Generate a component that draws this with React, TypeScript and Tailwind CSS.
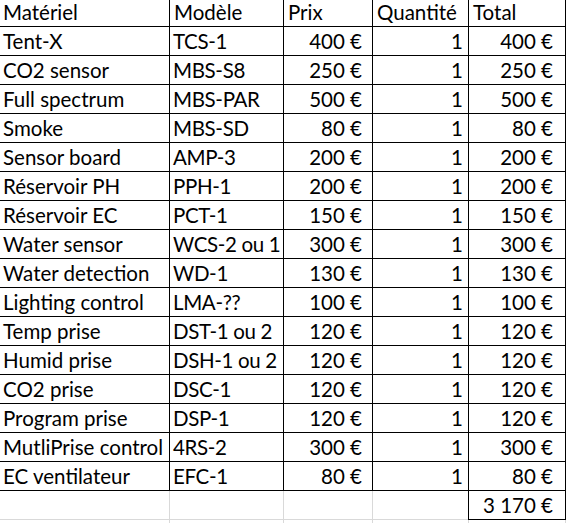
import React from 'react';

type Row = {
  item: string;
  model: string;
  price: string;
  qty: string;
  total: string;
};

const rows: Row[] = [
  { item: 'Tent-X', model: 'TCS-1', price: '400 €', qty: '1', total: '400 €' },
  { item: 'CO2 sensor', model: 'MBS-S8', price: '250 €', qty: '1', total: '250 €' },
  { item: 'Full spectrum', model: 'MBS-PAR', price: '500 €', qty: '1', total: '500 €' },
  { item: 'Smoke', model: 'MBS-SD', price: '80 €', qty: '1', total: '80 €' },
  { item: 'Sensor board', model: 'AMP-3', price: '200 €', qty: '1', total: '200 €' },
  { item: 'Réservoir PH', model: 'PPH-1', price: '200 €', qty: '1', total: '200 €' },
  { item: 'Réservoir EC', model: 'PCT-1', price: '150 €', qty: '1', total: '150 €' },
  { item: 'Water sensor', model: 'WCS-2 ou 1', price: '300 €', qty: '1', total: '300 €' },
  { item: 'Water detection', model: 'WD-1', price: '130 €', qty: '1', total: '130 €' },
  { item: 'Lighting control', model: 'LMA-??', price: '100 €', qty: '1', total: '100 €' },
  { item: 'Temp prise', model: 'DST-1 ou 2', price: '120 €', qty: '1', total: '120 €' },
  { item: 'Humid prise', model: 'DSH-1 ou 2', price: '120 €', qty: '1', total: '120 €' },
  { item: 'CO2 prise', model: 'DSC-1', price: '120 €', qty: '1', total: '120 €' },
  { item: 'Program prise', model: 'DSP-1', price: '120 €', qty: '1', total: '120 €' },
  { item: 'MutliPrise control', model: '4RS-2', price: '300 €', qty: '1', total: '300 €' },
  { item: 'EC ventilateur', model: 'EFC-1', price: '80 €', qty: '1', total: '80 €' },
];

// column widths incl. right border
const c1 = 'w-[170px] shrink-0';
const c2 = 'w-[114px] shrink-0';
const c3 = 'w-[89px] shrink-0';
const c4 = 'w-[96px] shrink-0';
const c5 = 'w-[97px] shrink-0';

const cell = 'flex items-end pb-[4px] border-r border-black leading-none whitespace-nowrap overflow-hidden';

export default function App() {
  return (
    <div
      className="w-[566px] h-[523px] overflow-hidden bg-white text-black text-[20.5px]"
      style={{ fontFamily: 'Lato, "Open Sans", sans-serif' }}
    >
      {/* Header */}
      <div className="flex h-[27px] border-b border-black">
        <div className={`${c1} ${cell} pl-[3px]`}>Matériel</div>
        <div className={`${c2} ${cell} pl-[4px]`}>Modèle</div>
        <div className={`${c3} ${cell} pl-[4px]`}>Prix</div>
        <div className={`${c4} ${cell} pl-[4px]`}>Quantité</div>
        <div className={`${c5} ${cell} pl-[4px]`}>Total</div>
      </div>

      {rows.map((r) => (
        <div key={r.item} className="flex h-[29px] border-b border-black">
          <div className={`${c1} ${cell} pl-[3px]`}>{r.item}</div>
          <div className={`${c2} ${cell} pl-[3px] tracking-[-0.35px]`}>{r.model}</div>
          <div className={`${c3} ${cell} justify-end pr-[10px]`}>{r.price}</div>
          <div className={`${c4} ${cell} justify-end pr-[5px]`}>{r.qty}</div>
          <div className={`${c5} ${cell} justify-end pr-[12px]`}>{r.total}</div>
        </div>
      ))}

      {/* Total row */}
      <div className="flex h-[29px]">
        <div className={`${c1} border-r border-b border-[#d9d9d9]`} />
        <div className={`${c2} border-r border-b border-[#d9d9d9]`} />
        <div className={`${c3} border-r border-b border-[#d9d9d9]`} />
        <div className="w-[96px] shrink-0 border-b border-[#d9d9d9]" />
        <div className="w-[98px] shrink-0 -ml-[1px] flex items-end justify-end pb-[4px] pr-[12px] leading-none border-l border-r border-b border-black">
          3 170 €
        </div>
      </div>
      <div className="flex h-[29px]">
        <div className={`${c1} border-r border-[#d9d9d9]`} />
        <div className={`${c2} border-r border-[#d9d9d9]`} />
        <div className={`${c3} border-r border-[#d9d9d9]`} />
        <div className={`${c4} border-r border-[#d9d9d9]`} />
        <div className={`${c5} border-r border-[#d9d9d9]`} />
      </div>
    </div>
  );
}
